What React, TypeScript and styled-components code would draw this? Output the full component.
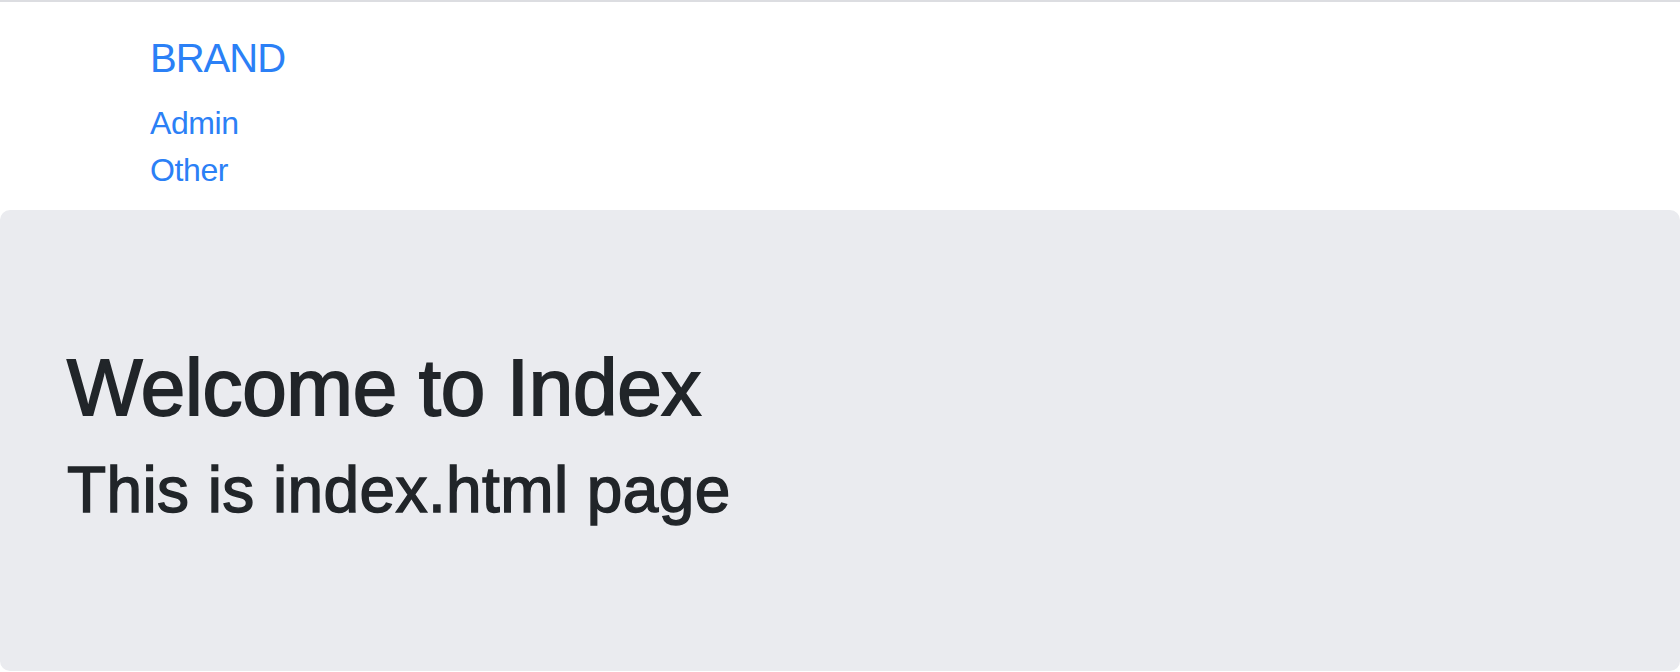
import React from "react";
import styled, { createGlobalStyle } from "styled-components";

const GlobalStyle = createGlobalStyle`
  html, body {
    margin: 0;
    padding: 0;
    background: #ffffff;
  }
  body {
    font-family: "Liberation Sans", Arial, sans-serif;
    color: #212529;
  }
  * { box-sizing: border-box; }
`;

const Page = styled.div`
  border-top: 2px solid #dcdde1;
  display: flex;
  flex-direction: column;
`;

const Navbar = styled.nav`
  padding: 26px 150px 16px;
  display: flex;
  flex-direction: column;
`;

const Brand = styled.a`
  display: block;
  font-size: 40px;
  line-height: 60px;
  letter-spacing: -1px;
  color: #2b80f6;
  text-decoration: none;
  font-weight: 400;
`;

const NavList = styled.ul`
  list-style: none;
  margin: 12px 0 0;
  padding: 0;
  display: flex;
  flex-direction: column;
`;

const NavLink = styled.a`
  display: block;
  font-size: 32px;
  line-height: 47px;
  letter-spacing: -0.4px;
  color: #2b80f6;
  text-decoration: none;
`;

const Jumbotron = styled.section`
  background: #eaebef;
  border-radius: 10px;
  padding: 130px 64px 126px 67px;
`;

const Title = styled.h1`
  margin: 0 0 16px;
  font-size: 80px;
  line-height: 96px;
  font-weight: 400;
  letter-spacing: -0.3px;
  color: #212529;
  -webkit-text-stroke: 1.8px #212529;
`;

const Subtitle = styled.h2`
  margin: 0 0 16px;
  font-size: 64px;
  line-height: 76.8px;
  font-weight: 400;
  letter-spacing: 0.4px;
  color: #212529;
  -webkit-text-stroke: 1.4px #212529;
`;

export default function App() {
  return (
    <>
      <GlobalStyle />
      <Page>
        <Navbar>
          <Brand href="#">BRAND</Brand>
          <NavList>
            <li>
              <NavLink href="#">Admin</NavLink>
            </li>
            <li>
              <NavLink href="#">Other</NavLink>
            </li>
          </NavList>
        </Navbar>
        <Jumbotron>
          <Title>Welcome to Index</Title>
          <Subtitle>This is index.html page</Subtitle>
        </Jumbotron>
      </Page>
    </>
  );
}
